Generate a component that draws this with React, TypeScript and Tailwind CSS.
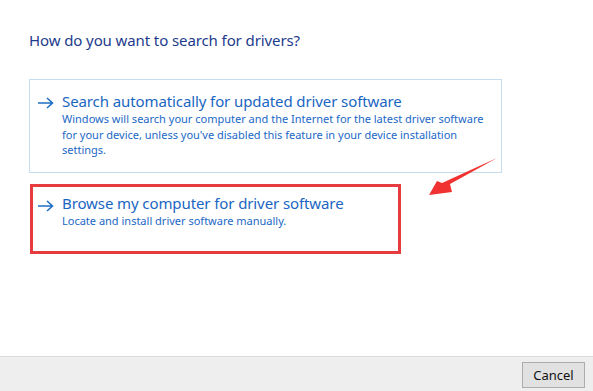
import React from "react";

function Arrow({ className }: { className?: string }) {
  return (
    <svg width="17" height="12" viewBox="0 0 17 12" className={className}>
      <path d="M1 6 H15.5 M10 1 L15.5 6 L10 11" fill="none" stroke="#1f6fc5" strokeWidth="1.6" />
    </svg>
  );
}

export default function App() {
  return (
    <div
      className="relative w-[593px] h-[391px] bg-white flex flex-col overflow-hidden"
      style={{ fontFamily: '"Noto Sans", "Open Sans", sans-serif' }}
    >
      <div className="flex-1 flex flex-col pl-[29px]">
        <div className="mt-[30px] text-[15px] leading-[20px] text-[#1d3b8c] tracking-[-0.1px] whitespace-nowrap">
          How do you want to search for drivers?
        </div>
        <div className="mt-[29px] w-[473px] h-[94px] border border-[#c6dcef] flex pt-[11px]">
          <Arrow className="ml-[7px] mt-[6px] shrink-0" />
          <div className="ml-[8px]">
            <div className="text-[15px] leading-[20px] text-[#1a66c2] tracking-[-0.1px] whitespace-nowrap">
              Search automatically for updated driver software
            </div>
            <div className="text-[11px] leading-[15.5px] text-[#1a68c6] whitespace-nowrap">
              Windows will search your computer and the Internet for the latest driver software
              <br />
              for your device, unless you've disabled this feature in your device installation
              <br />
              settings.
            </div>
          </div>
        </div>
        <div className="mt-[11px] ml-[1px] w-[371px] h-[70px] border-[3px] border-[#e63b3f] flex pt-[6px]">
          <Arrow className="ml-[4px] mt-[7px] shrink-0" />
          <div className="ml-[8px]">
            <div className="text-[15px] leading-[20px] text-[#1a66c2] tracking-[-0.1px] whitespace-nowrap">
              Browse my computer for driver software
            </div>
            <div className="text-[11px] leading-[15.5px] text-[#1a68c6] whitespace-nowrap">
              Locate and install driver software manually.
            </div>
          </div>
        </div>
      </div>
      <div className="h-[35px] border-t border-[#dadada] bg-[#eeeeee] flex items-start justify-end pr-[8px] pt-[5px]">
        <button className="w-[63px] h-[26px] border border-[#adadad] bg-[#e1e1e1] text-[13px] text-[#111] leading-none">
          Cancel
        </button>
      </div>
      <svg className="absolute left-[425px] top-[152px]" width="80" height="50" viewBox="425 152 80 50">
        <polygon points="497,158 450,184 452,192 429,195 437,181 442,183" fill="#f03232" />
      </svg>
    </div>
  );
}
